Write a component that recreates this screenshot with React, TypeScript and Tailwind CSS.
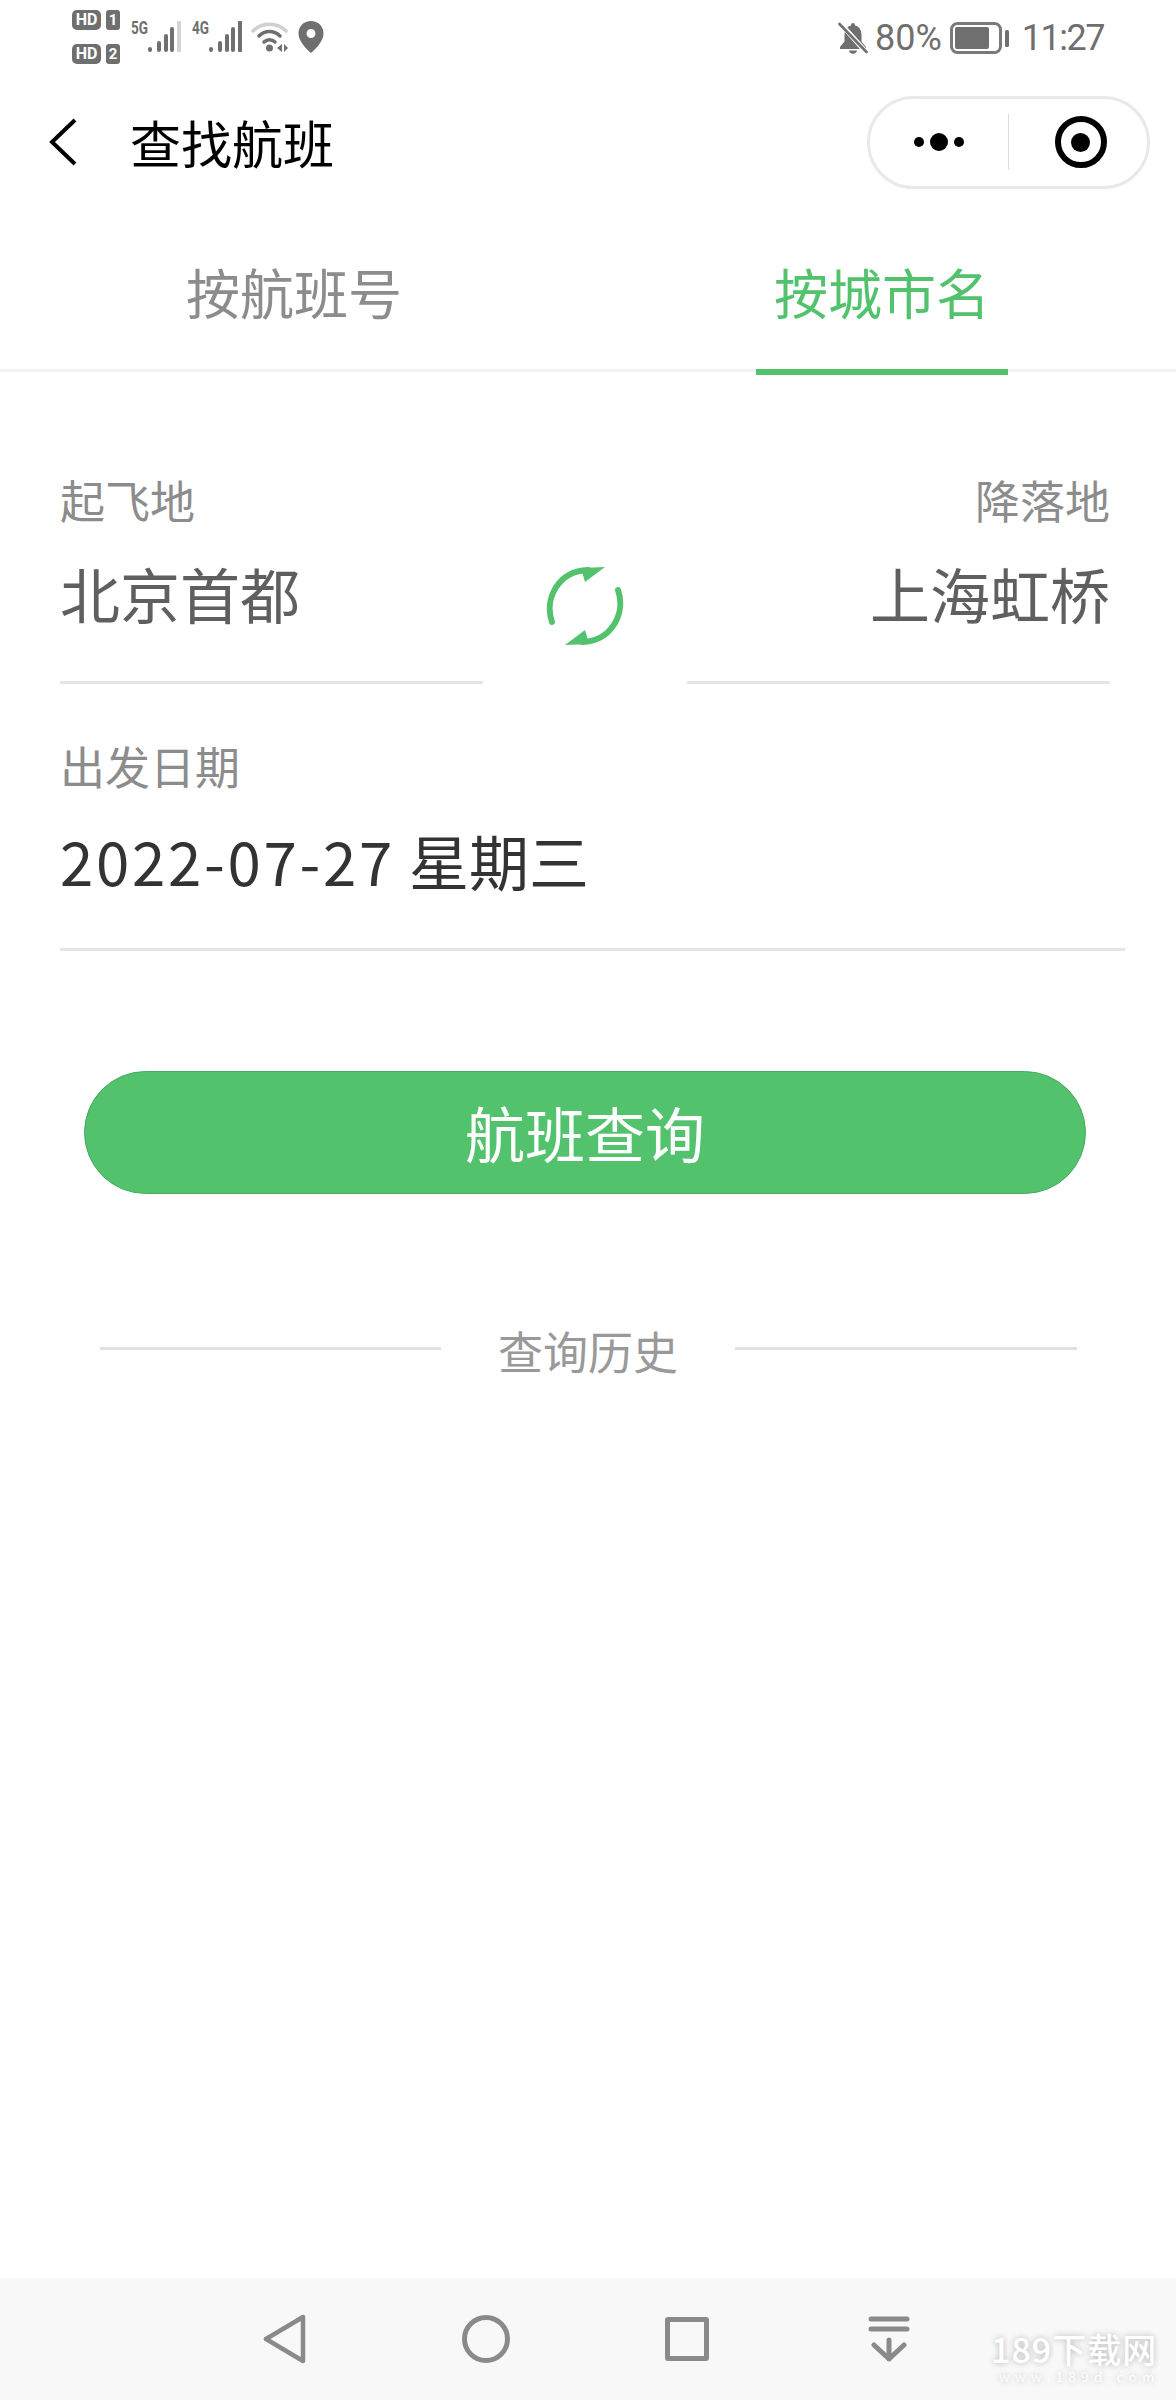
import type { ReactNode } from "react";

const cjk = "font-['Noto_Sans_CJK_SC','Noto_Sans',sans-serif]";

function HdBadge({ n }: { n: string }) {
  return (
    <div className="flex items-center gap-[5px]">
      <span className="flex h-[20px] w-[29px] items-center justify-center rounded-[5px] bg-[#6f6f6f] font-['Roboto',sans-serif] text-[16px] font-bold leading-none text-white">
        HD
      </span>
      <span className="flex h-[20px] w-[14px] items-center justify-center rounded-[3px] bg-[#6f6f6f] font-['Roboto',sans-serif] text-[15px] font-bold leading-none text-white">
        {n}
      </span>
    </div>
  );
}

function Signal({ label, lastLight }: { label: string; lastLight?: boolean }) {
  return (
    <div className="flex items-start">
      <span className="w-[17px] origin-top-left scale-x-75 whitespace-nowrap font-['Roboto',sans-serif] text-[18px] font-bold leading-[16px] text-[#6f6f6f]">
        {label}
      </span>
      <svg width="33" height="32" viewBox="0 0 33 32" className="block">
        <rect x="0" y="27" width="4" height="5" rx="2" fill="#6f6f6f" />
        <rect x="9" y="21" width="4" height="11" rx="2" fill="#6f6f6f" />
        <rect x="16" y="14" width="4" height="18" rx="2" fill="#6f6f6f" />
        <rect x="22" y="7" width="4" height="25" rx="2" fill="#6f6f6f" />
        <rect x="29" y="1" width="4" height="31" rx="1" fill={lastLight ? "#d4d4d4" : "#6f6f6f"} />
      </svg>
    </div>
  );
}

function Wifi() {
  return (
    <svg width="38" height="32" viewBox="0 0 38 32" className="block" fill="none">
      <path d="M2 10 C11 1 26 1 35 10" stroke="#d0d0d0" strokeWidth="3.5" strokeLinecap="round" />
      <path d="M8 15 C14 9 23 9 29 15" stroke="#6f6f6f" strokeWidth="3.5" strokeLinecap="round" />
      <path d="M13 21 C16 18 21 18 24 21" stroke="#6f6f6f" strokeWidth="3.5" strokeLinecap="round" />
      <circle cx="18.5" cy="27" r="3.5" fill="#6f6f6f" />
      <path d="M26 27 L31 23 V31 Z" fill="#6f6f6f" />
      <path d="M37 27 L33 23 V31 Z" fill="#6f6f6f" />
    </svg>
  );
}

function Pin() {
  return (
    <svg width="26" height="32" viewBox="0 0 26 32" className="block">
      <path
        fillRule="evenodd"
        d="M13 0 C5.8 0 0.5 5.4 0.5 12.4 C0.5 20 8 27.5 13 32 C18 27.5 25.5 20 25.5 12.4 C25.5 5.4 20.2 0 13 0 Z M13 8 A4.5 4.5 0 1 1 13 17 A4.5 4.5 0 1 1 13 8 Z"
        fill="#6f6f6f"
      />
    </svg>
  );
}

function BellOff() {
  return (
    <svg width="30" height="32" viewBox="0 0 30 32" className="block">
      <path
        d="M15 1 C13.6 1 13 2 13 3.4 C8.4 4.6 6.5 8.4 6.5 13 V19.5 L2 25 V27 H28 V25 L23.5 19.5 V13 C23.5 8.4 21.6 4.6 17 3.4 C17 2 16.4 1 15 1 Z"
        fill="#6f6f6f"
      />
      <path d="M11 28.5 H19 C18.6 30.6 17 31.8 15 31.8 C13 31.8 11.4 30.6 11 28.5 Z" fill="#6f6f6f" />
      <path d="M2 1 L28 30" stroke="#fff" strokeWidth="5" />
      <path d="M1.5 2 L28.5 30" stroke="#6f6f6f" strokeWidth="2.6" strokeLinecap="round" />
    </svg>
  );
}

function Battery() {
  return (
    <svg width="59" height="32" viewBox="0 0 59 32" className="block">
      <rect x="1.5" y="1.5" width="49" height="29" rx="6" fill="none" stroke="#7a7a7a" strokeWidth="3" />
      <rect x="5" y="5" width="34" height="22" rx="2" fill="#6f6f6f" />
      <rect x="55" y="8" width="4" height="17" rx="1.5" fill="#6f6f6f" />
    </svg>
  );
}

function SwapIcon() {
  const half = (
    <>
      <path d="M6 55 C-2 32 12 4 42 3" fill="none" stroke="#52c26c" strokeWidth="6" strokeLinecap="round" />
      <path d="M35 1 L59 0 L39 15 Z" fill="#52c26c" />
    </>
  );
  return (
    <svg width="78" height="78" viewBox="0 0 78 78" className="block">
      <g>{half}</g>
      <g transform="rotate(180 39 39)">{half}</g>
    </svg>
  );
}

function Field({ label, value, right }: { label: string; value: string; right?: boolean }) {
  return (
    <div className={`w-[423px] border-b-[3px] border-[#e5e5e5] pb-[48px] ${right ? "text-right" : ""}`}>
      <div className="text-[45px] leading-[60px] text-[#8c8c8c]">{label}</div>
      <div className="mt-[23px] text-[60px] leading-[80px] text-[#5f5f5f]">{value}</div>
    </div>
  );
}

function NavIcon({ children, className }: { children: ReactNode; className?: string }) {
  return <div className={`flex w-[48px] justify-center ${className ?? ""}`}>{children}</div>;
}

export default function App() {
  return (
    <div className={`flex min-h-[2400px] w-[1176px] flex-col bg-white ${cjk}`}>
      {/* status bar */}
      <div className="flex h-[76px] items-start justify-between pl-[72px] pr-[72px] pt-[8px]">
        <div className="flex items-start">
          <div className="flex flex-col gap-[14px] pt-[2px]">
            <HdBadge n="1" />
            <HdBadge n="2" />
          </div>
          <div className="ml-[11px] mt-[12px]">
            <Signal label="5G" lastLight />
          </div>
          <div className="ml-[11px] mt-[12px]">
            <Signal label="4G" />
          </div>
          <div className="ml-[9px] mt-[13px]">
            <Wifi />
          </div>
          <div className="ml-[9px] mt-[13px]">
            <Pin />
          </div>
        </div>
        <div className="flex items-center pt-[14px] font-['Roboto',sans-serif] text-[36px] leading-[32px] text-[#6f6f6f]">
          <BellOff />
          <span className="ml-[7px]">80%</span>
          <div className="ml-[8px]">
            <Battery />
          </div>
          <span className="ml-[13px] tracking-[-1.5px]">11:27</span>
        </div>
      </div>

      {/* nav */}
      <div className="flex h-[132px] items-center pl-[49px] pr-[26px]">
        <svg width="28" height="48" viewBox="0 0 28 48" className="block">
          <path d="M26 2 L3 24 L26 46" fill="none" stroke="#000" strokeWidth="4" />
        </svg>
        <div className="ml-[53px] text-[51px] leading-[60px] text-black">查找航班</div>
        <div className="ml-auto flex h-[93px] w-[283px] items-center rounded-full border-[3px] border-[#e9e9e9]">
          <div className="flex w-[138px] items-center justify-center gap-[6px]">
            <span className="h-[10px] w-[10px] rounded-full bg-black" />
            <span className="h-[18px] w-[18px] rounded-full bg-black" />
            <span className="h-[10px] w-[10px] rounded-full bg-black" />
          </div>
          <div className="h-[56px] w-[1px] bg-[#dddddd]" />
          <div className="flex flex-1 justify-center pl-[5px]">
            <span className="flex h-[52px] w-[52px] items-center justify-center rounded-full border-[6px] border-black">
              <span className="h-[19px] w-[19px] rounded-full bg-black" />
            </span>
          </div>
        </div>
      </div>

      {/* tabs */}
      <div className="flex h-[164px] border-b-[3px] border-[#f2f2f2]">
        <div className="flex w-[588px] justify-center pt-[49px] text-[54px] leading-[70px] text-[#8c8c8c]">按航班号</div>
        <div className="relative flex w-[588px] justify-center pt-[49px] text-[54px] leading-[70px] text-[#52c26c]">
          按城市名
          <span className="absolute bottom-[-6px] left-[168px] h-[6px] w-[252px] bg-[#52c26c]" />
        </div>
      </div>

      {/* form */}
      <div className="pl-[60px] pr-[51px]">
        <div className="mr-[15px] mt-[98px] flex items-start justify-between">
          <Field label="起飞地" value="北京首都" />
          <div className="mt-[97px]">
            <SwapIcon />
          </div>
          <Field label="降落地" value="上海虹桥" right />
        </div>

        <div className="mt-[52px] border-b-[3px] border-[#e5e5e5] pb-[48px]">
          <div className="text-[45px] leading-[60px] text-[#8c8c8c]">出发日期</div>
          <div className="mt-[24px] flex text-[60px] leading-[80px] text-[#333333]">
            <span className="tracking-[2.7px]">2022-07-27</span>
            <span className="ml-[14px]">星期三</span>
          </div>
        </div>

        <button className="ml-[24px] mt-[120px] flex h-[123px] w-[1002px] items-center justify-center rounded-full border border-[#47ab60] bg-[#52c26c] pb-[2px] text-[60px] leading-[80px] text-white">
          航班查询
        </button>
      </div>

      {/* history divider */}
      <div className="mt-[153px] flex items-start pl-[100px] pr-[99px]">
        <div className="h-[3px] w-[341px] bg-[#e0e0e0]" />
        <div className="flex-1 text-center">
          <div className="-mt-[26px] text-[45px] leading-[60px] text-[#999999]">查询历史</div>
        </div>
        <div className="h-[3px] w-[342px] bg-[#e0e0e0]" />
      </div>

      {/* android nav bar */}
      <div className="relative mt-auto flex h-[122px] items-center bg-[#f8f8f8] pl-[261px]">
        <NavIcon>
          <svg width="44" height="50" viewBox="0 0 44 50" className="block">
            <path d="M3 25 L40 3 V47 Z" fill="none" stroke="#8a8a8a" strokeWidth="4.5" strokeLinejoin="round" />
          </svg>
        </NavIcon>
        <NavIcon className="ml-[153px]">
          <span className="h-[48px] w-[48px] rounded-full border-[5px] border-[#8a8a8a]" />
        </NavIcon>
        <NavIcon className="ml-[153px]">
          <span className="h-[44px] w-[44px] rounded-[3px] border-[5px] border-[#8a8a8a]" />
        </NavIcon>
        <NavIcon className="ml-[154px]">
          <svg width="42" height="46" viewBox="0 0 42 46" className="block" fill="none" stroke="#8a8a8a" strokeWidth="5" strokeLinecap="round" strokeLinejoin="round">
            <path d="M3 3 H39" />
            <path d="M3 13 H39" />
            <path d="M21 24 V43 M6 29 L21 43 L36 29" />
          </svg>
        </NavIcon>
        <div className="absolute left-[991px] top-[54px] text-white [text-shadow:0_0_6px_rgba(0,0,0,0.28)]">
          <div className="whitespace-nowrap text-[34px] font-medium leading-[34px] tracking-[1px]">189下载网</div>
          <div className="mt-[4px] whitespace-nowrap pl-[8px] text-[13px] leading-[14px] tracking-[5.6px]">www.189d.com</div>
        </div>
      </div>
    </div>
  );
}
